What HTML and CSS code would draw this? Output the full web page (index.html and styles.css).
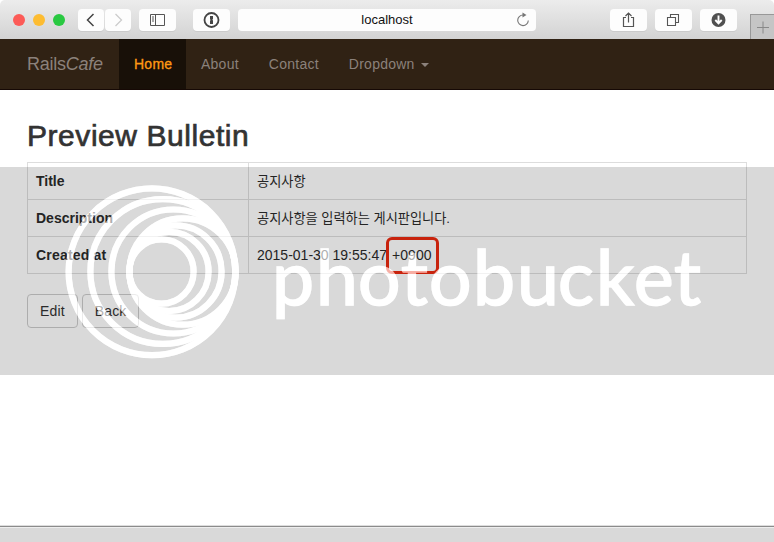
FILE: index.html
```
<!DOCTYPE html>
<html lang="ko">
<head>
<meta charset="utf-8">
<title>RailsCafe</title>
<link rel="stylesheet" href="styles.css">
</head>
<body>
<div class="window">
  <header class="toolbar">
    <div class="lights"><i class="red"></i><i class="yellow"></i><i class="green"></i></div>
    <div class="history">
      <span class="tool"><svg width="26" height="22" fill="none" stroke="#444" stroke-width="1.5"><path d="M15.5 5 9.500 11l6 6"/></svg></span>
      <span class="tool"><svg width="26" height="22" fill="none" stroke="#ccc" stroke-width="1.3"><path d="m10.500 5 6 6-6 6"/></svg></span>
    </div>
    <span class="tool sidebar"><svg width="37" height="22" fill="none" stroke="#555"><path d="M11.500 5.500h14v11h-14zM16.500 5.500v11M13 8h2M13 10h2M13 12h2"/></svg></span>
    <span class="tool password"><svg width="37" height="22"><circle cx="18.500" cy="11" r="7" fill="none" stroke="#444" stroke-width="1.800"/><path d="M17 7h3v3l-.7.8.7.8V15h-3v-3.200l.7-.8-.7-.8z" fill="#444"/></svg></span>
    <div class="address"><span>localhost</span><svg class="reload" width="16" height="18" fill="none" stroke="#777" stroke-width="1.100"><path d="M8 4a5.300 5.300 0 1 0 5.300 5.500"/><path d="M7.500 1.500 11.500 4 7.500 6.500z" fill="#777" stroke="none"/></svg></div>
    <span class="tool share"><svg width="37" height="22" fill="none" stroke="#555" stroke-width="1.200"><path d="M16 8.500h-2.500v9h10v-9H21M18.500 13.500V4M15.500 7l3-3 3 3"/></svg></span>
    <span class="tool tabs"><svg width="37" height="22" fill="none" stroke="#555" stroke-width="1.100"><path d="M12.500 8.500h8v8h-8zM15.500 8.500v-3h8v8h-3"/></svg></span>
    <span class="tool download"><svg width="37" height="22"><circle cx="18.500" cy="11" r="7" fill="#505050"/><path d="M18.500 6.500v7.500M15.300 11l3.200 3.400 3.200-3.400" fill="none" stroke="#fff" stroke-width="1.900"/></svg></span>
    <span class="newtab"><svg width="23" height="24" stroke="#888"><path d="M6 12.500h12M12 6.500v12"/></svg></span>
  </header>
  <nav class="navbar">
    <a class="brand">Rails<em>Cafe</em></a>
    <a class="link active">Home</a>
    <a class="link">About</a>
    <a class="link">Contact</a>
    <a class="link">Dropdown<b class="caret"></b></a>
  </nav>
  <main class="content">
    <h1>Preview Bulletin</h1>
    <table>
      <tr><th>Title</th><td class="ko">공지사항</td></tr>
      <tr><th>Description</th><td class="ko">공지사항을 입력하는 게시판입니다.</td></tr>
      <tr><th class="created">Created at</th><td>2015-01-30 19:55:47 <span class="zone">+0900</span></td></tr>
    </table>
    <div class="actions"><a class="btn">Edit</a><a class="btn">Back</a></div>
  </main>
  <footer class="status"></footer>
  <div class="watermark">
    <svg width="774" height="208" viewBox="0 167 774 208">
      <mask id="band" maskUnits="userSpaceOnUse" x="0" y="167" width="774" height="208">
        <rect y="167" width="774" height="208" fill="#fff"/>
        <use href="#mark" color="#000"/>
      </mask>
      <rect y="167" width="774" height="208" fill="#000" fill-opacity=".15" mask="url(#band)"/>
      <g opacity=".62" color="#fff">
        <g id="mark">
          <g fill="none" stroke="currentColor" stroke-width="6.200">
            <circle cx="152" cy="271.800" r="83.400"/>
            <circle cx="162.800" cy="271.500" r="72.400"/>
            <circle cx="173.400" cy="271.500" r="62"/>
            <circle cx="182.600" cy="271.500" r="53.200"/>
            <circle cx="175.500" cy="271.500" r="46.100"/>
            <circle cx="169" cy="271.500" r="39.600"/>
            <circle cx="161.500" cy="271.500" r="32.100"/>
          </g>
          <text class="wordmark" y="305" x="272 316 358 401 429 473 517 558 596 634 674">photobucket</text>
        </g>
      </g>
    </svg>
  </div>
</div>
</body>
</html>
```

FILE: styles.css
```
*, ::before, ::after { box-sizing: border-box; }
body { margin: 0; background: #fff; color: #333; font: 14px/20px "Liberation Sans", "Noto Sans CJK KR", sans-serif; }
.window { position: relative; display: flex; flex-direction: column; width: 774px; height: 542px; overflow: hidden; }
svg { display: block; flex: none; }

.toolbar { display: flex; align-items: center; flex: none; height: 39px; padding-left: 13px; background: linear-gradient(#ececec, #d3d3d3); border-radius: 5px 5px 0 0; }
.lights { display: flex; gap: 8px; width: 65px; }
.lights i { width: 12px; height: 12px; border-radius: 50%; }
.red { background: #fc5b57; }
.yellow { background: #fdbc31; }
.green { background: #29c941; }
.history { display: flex; gap: 1px; margin-right: 8px; }
.tool { display: block; flex: none; height: 22px; background: #fdfdfd; border-radius: 4px; box-shadow: 0 1px 0 rgba(0, 0, 0, .06); }
.password { margin: 0 8px 0 17px; }
.address { display: flex; align-items: center; justify-content: center; position: relative; width: 298px; height: 22px; background: #fdfdfd; border-radius: 4px; color: #111; font-size: 13px; }
.reload { position: absolute; right: 5px; top: 2px; }
.share { margin-left: 74px; }
.tabs { margin: 0 8px; }
.newtab { flex: none; align-self: flex-end; width: 24px; height: 25px; margin-left: 13px; border: 1px solid #989898; border-width: 1px 0 0 1px; background: #c5c5c5; }

.navbar { display: flex; flex: none; height: 51px; padding-left: 12px; background: #302214; border-bottom: 1px solid #160905; color: #8b817b; }
.brand { width: 107px; padding: 15px 15px; font-size: 18px; letter-spacing: -.25px; }
.link { padding: 15px 15px; font-size: 14px; line-height: 20px; letter-spacing: .25px; }
.active { width: 67px; padding-right: 0; background: #181008; color: #ff9914; -webkit-text-stroke: .3px #ff9914; }
.caret { display: inline-block; margin-left: 6px; vertical-align: middle; border: 4px solid transparent; border-top-color: currentColor; border-bottom: 0; }

.content { flex: 1; padding: 28px 27px 0; }
h1 { margin: 0 0 9px; font-size: 30px; line-height: 35px; font-weight: 400; letter-spacing: .55px; -webkit-text-stroke: .7px #333; }
table { width: 720px; border-collapse: collapse; table-layout: fixed; color: #2b2b2b; }
th, td { height: 37px; padding: 0 8px; border: 1px solid #ddd; text-align: left; vertical-align: middle; line-height: 20px; }
th { width: 221px; }
.created { letter-spacing: .2px; }
.ko { padding-top: 1px; font-size: 13.200px; }
.zone { position: relative; margin-left: 1px; letter-spacing: .1px; }
.zone::after { content: ""; position: absolute; left: -6px; top: -10px; width: 53px; height: 37px; border: 3px solid #ec2a10; border-radius: 6px; }
.actions { display: flex; gap: 4px; margin-top: 20px; }
.btn { height: 34px; padding: 6px 12px; border: 1px solid #ccc; border-radius: 4px; letter-spacing: .15px; }

.status { height: 16px; flex: none; background: #d9d9d9; border-top: 1px solid #8b8b8b; box-shadow: inset 0 1px #eee, 0 -1px #ddd; }
.watermark { position: absolute; left: 0; top: 167px; }
.wordmark { font-family: Lato, sans-serif; font-size: 75px; fill: currentColor; stroke: currentColor; stroke-width: 1.600px; }
```
